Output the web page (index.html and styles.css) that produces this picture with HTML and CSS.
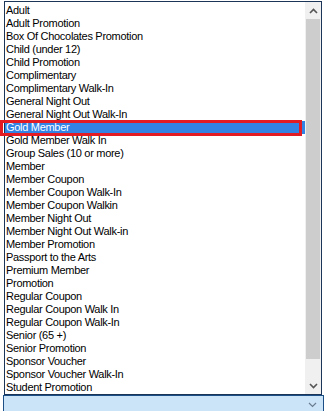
FILE: index.html
```html
<!DOCTYPE html>
<html lang="en">
<head>
    <meta charset="UTF-8">
    <title>Ticket Type</title>
    <link rel="stylesheet" href="styles.css">
</head>
<body>
    <div class="screen">
        <div class="dropdown">
            <ul class="items">
                <li>Adult</li>
                <li>Adult Promotion</li>
                <li>Box Of Chocolates Promotion</li>
                <li>Child (under 12)</li>
                <li>Child Promotion</li>
                <li>Complimentary</li>
                <li>Complimentary Walk-In</li>
                <li>General Night Out</li>
                <li>General Night Out Walk-In</li>
                <li class="selected">Gold Member</li>
                <li>Gold Member Walk In</li>
                <li>Group Sales (10 or more)</li>
                <li>Member</li>
                <li>Member Coupon</li>
                <li>Member Coupon Walk-In</li>
                <li>Member Coupon Walkin</li>
                <li>Member Night Out</li>
                <li>Member Night Out Walk-in</li>
                <li>Member Promotion</li>
                <li>Passport to the Arts</li>
                <li>Premium Member</li>
                <li>Promotion</li>
                <li>Regular Coupon</li>
                <li>Regular Coupon Walk In</li>
                <li>Regular Coupon Walk-In</li>
                <li>Senior (65 +)</li>
                <li>Senior Promotion</li>
                <li>Sponsor Voucher</li>
                <li>Sponsor Voucher Walk-In</li>
                <li>Student Promotion</li>
            </ul>
            <div class="scrollbar">
                <div class="scroll-btn">
                    <svg width="9" height="6" viewBox="0 0 9 6"><path d="M1 5 L4.5 1.5 L8 5" fill="none" stroke="#555" stroke-width="1.6"/></svg>
                </div>
                <div class="thumb"></div>
                <div class="track"></div>
                <div class="scroll-btn">
                    <svg width="9" height="6" viewBox="0 0 9 6"><path d="M1 1 L4.5 4.5 L8 1" fill="none" stroke="#555" stroke-width="1.6"/></svg>
                </div>
            </div>
        </div>

        <!-- combo box under the open list -->
        <div class="combo">
            <svg class="combo-arrow" width="9" height="6" viewBox="0 0 9 6"><path d="M1 1 L4.5 4.5 L8 1" fill="none" stroke="#6a7d90" stroke-width="1.2"/></svg>
        </div>

        <!-- red highlight drawn over the selected row -->
        <div class="annotation"></div>
    </div>
</body>
</html>
```

FILE: styles.css
```css
body {
    margin: 0;
    background-color: #ffffff;
    font-family: "Liberation Sans", Arial, sans-serif;
    overflow: hidden;
}
.screen {
    position: relative;
    width: 327px;
    height: 411px;
    overflow: hidden;
    padding-top: 1px;
    box-sizing: border-box;
}
.dropdown {
    display: flex;
    margin-left: 4px;
    width: 318px;
    height: 394px;
    box-sizing: border-box;
    border: 1px solid #1b3558;
    background-color: #ffffff;
}
.items {
    list-style: none;
    margin: 0;
    padding: 2px 0 0 0;
    flex: 1;
}
.items li {
    height: 13px;
    line-height: 13px;
    padding-left: 1px;
    font-size: 11px;
    letter-spacing: -0.3px;
    color: #000000;
    white-space: nowrap;
}
.items li.selected {
    background-color: #3283e4;
    color: #ffffff;
}
.scrollbar {
    width: 16px;
    display: flex;
    flex-direction: column;
    background-color: #f0f0f0;
}
.scroll-btn {
    height: 17px;
    display: flex;
    align-items: center;
    justify-content: center;
}
.thumb {
    height: 340px;
    margin: 0 1px 0 1px;
    background-color: #cdcdcd;
}
.track {
    flex: 1;
}
.combo {
    margin-left: 3px;
    width: 321px;
    height: 24px;
    box-sizing: border-box;
    border: 1px solid #1d4f87;
    border-bottom: none;
    background-color: #cce4f7;
    display: flex;
    justify-content: flex-end;
    padding: 6px 6px 0 0;
}
.annotation {
    position: absolute;
    left: 0;
    top: 120px;
    width: 302px;
    height: 16px;
    box-sizing: border-box;
    border: 3px solid #e31b23;
}
```
